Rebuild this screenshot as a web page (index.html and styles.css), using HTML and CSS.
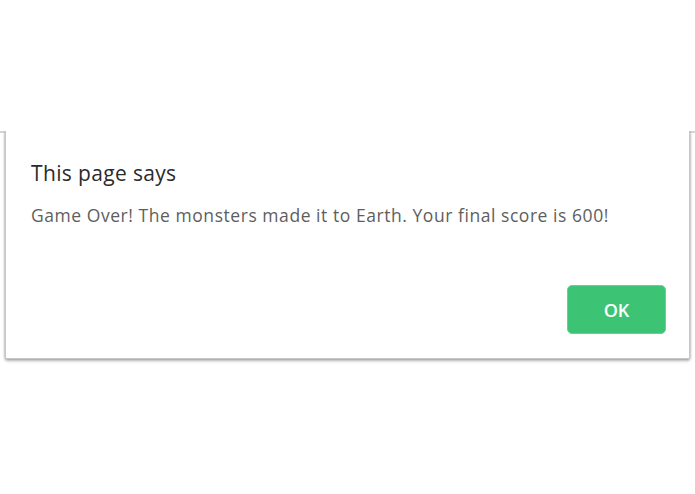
FILE: index.html
```html
<!DOCTYPE html>
<html>
<head>
<meta charset="utf-8">
<link rel="stylesheet" href="styles.css">
</head>
<body>
<div class="page">
  <div class="rule"></div>
</div>
<div class="dialog" role="alertdialog">
  <div class="title">This page says</div>
  <div class="message">Game Over! The monsters made it to Earth. Your final score is 600!</div>
  <div class="actions">
    <button class="ok">OK</button>
  </div>
</div>
</body>
</html>
```

FILE: styles.css
```css
html, body {
  margin: 0;
  padding: 0;
  background: #ffffff;
  width: 695px;
  height: 494px;
  overflow: hidden;
  font-family: "Open Sans", "Noto Sans", sans-serif;
}
.page {
  padding-top: 131px;
}
.rule {
  height: 2px;
  background: #d6d6d6;
}
.dialog {
  position: absolute;
  left: 5px;
  top: 131px;
  width: 685px;
  height: 228px;
  box-sizing: border-box;
  background: #ffffff;
  border: 1px solid #c8c8c8;
  border-top: none;
  border-radius: 0 0 2px 2px;
  box-shadow: 0 2px 3px rgba(0,0,0,0.3), -1px 0 2px rgba(0,0,0,0.12), 1px 0 2px rgba(0,0,0,0.12);
  clip-path: inset(0 -6px -6px -6px);
  padding: 28px 23px 24px 25px;
  display: flex;
  flex-direction: column;
}
.title {
  font-size: 21px;
  line-height: 28px;
  letter-spacing: 0.35px;
  color: #2b2b2b;
}
.message {
  margin-top: 17px;
  font-size: 17.5px;
  line-height: 22px;
  letter-spacing: 0.55px;
  color: #5e5e5e;
}
.actions {
  margin-top: auto;
  display: flex;
  justify-content: flex-end;
}
.ok {
  width: 99px;
  height: 49px;
  border: 1px solid #5ed68f;
  border-radius: 5px;
  background: #3cc474;
  color: #ffffff;
  font-family: "Open Sans", "Noto Sans", sans-serif;
  font-weight: 600;
  font-size: 18px;
  padding: 0;
}
```
